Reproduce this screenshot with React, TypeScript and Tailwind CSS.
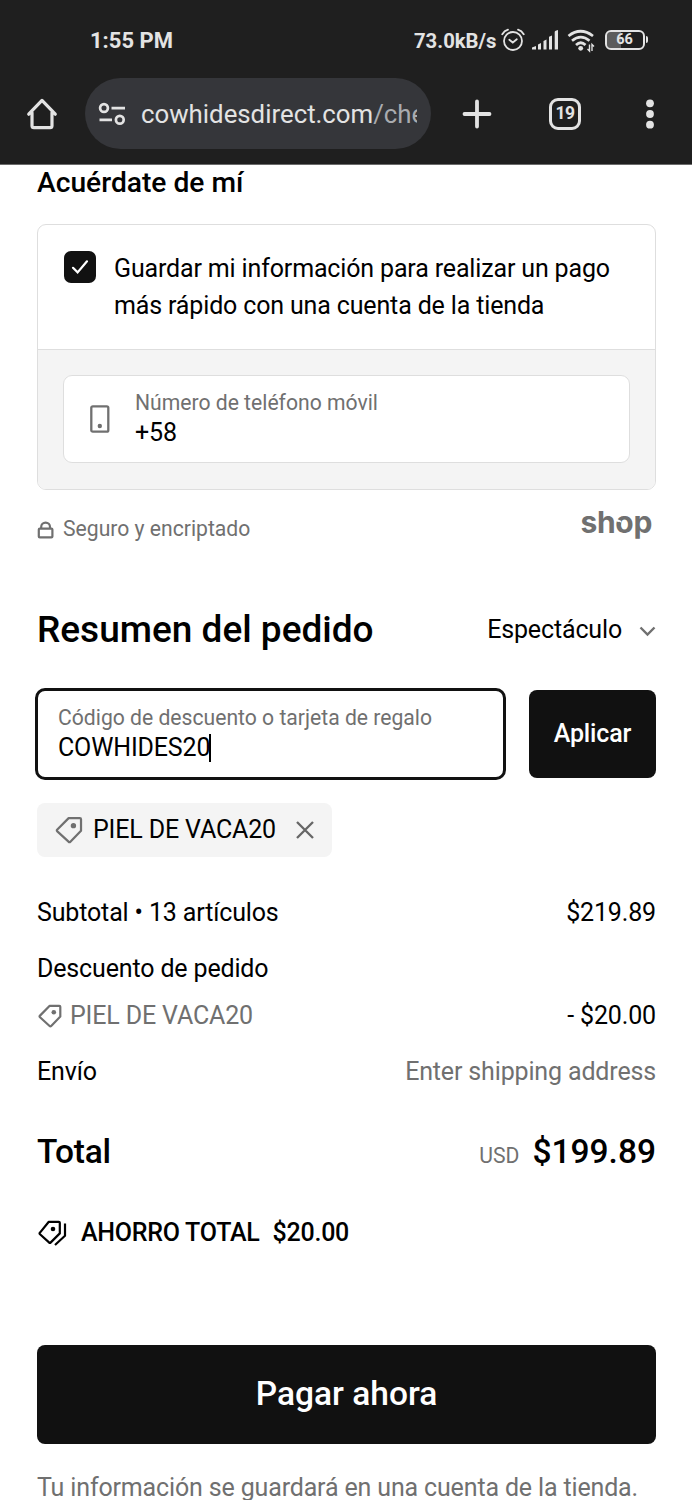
import type { ReactNode } from 'react'

const summaryRows = [
  { label: 'Subtotal • 13 artículos', value: '$219.89' },
  { label: 'Descuento de pedido', value: '' },
]

export default function App() {
  return (
    <div className="h-[1500px] w-[692px] overflow-hidden bg-white font-['Roboto',sans-serif] text-[25px] tracking-[-0.15px] text-black">
      <BrowserHeader />
      <main className="flex flex-col pr-9 pl-[37px]">
        <RememberMe />
        <OrderSummary />
        <button className="mt-[94px] h-[99px] rounded-lg bg-[#111] text-[33.5px] font-medium tracking-normal text-white">
          Pagar ahora
        </button>
        <p className="mt-[26px] leading-9 whitespace-nowrap text-[#707070]">
          Tu información se guardará en una cuenta de la tienda.
        </p>
      </main>
    </div>
  )
}

function BrowserHeader() {
  return (
    <header className="h-[165px] border-b border-[#6b6b6b] bg-[#1f1f1f] tracking-normal text-[#e3e3e3]">
      {/* Status bar */}
      <div className="flex h-[78px] items-center pt-[3px] pr-[44px] pl-[90px]">
        <span className="-mt-px text-[22px] font-bold">1:55 PM</span>
        <span className="mt-px ml-auto text-[20.3px] font-bold">73.0kB/s</span>
        <div className="ml-[4px] flex items-center">
          <AlarmIcon />
          <SignalIcon />
          <WifiIcon />
          <Battery level={66} />
        </div>
      </div>

      {/* Toolbar */}
      <div className="flex h-[71px] items-center">
        <HomeIcon />
        <div className="ml-[27px] flex h-[71px] w-[346px] items-center rounded-full bg-[#35363a] pr-[14px] pl-[13px]">
          <SiteSettingsIcon />
          <span className="ml-[14px] w-[276px] overflow-hidden text-[25.8px] leading-9 whitespace-nowrap">
            cowhidesdirect.com<span className="text-[#a9abaf]">/che</span>
          </span>
        </div>
        <svg className="ml-[31px]" width="30" height="30" viewBox="0 0 30 30" fill="none">
          <path d="M15 2.5v25M2.5 15h25" stroke="currentColor" strokeWidth="3.8" strokeLinecap="round" />
        </svg>
        <div className="ml-[57px] flex h-8 w-8 items-center justify-center rounded-[9px] border-[3.5px] border-current text-[17.5px] font-bold tracking-[-0.5px]">
          19
        </div>
        <svg className="ml-16" width="10" height="30" viewBox="0 0 10 30" fill="currentColor">
          <circle cx="5" cy="4.3" r="3.9" />
          <circle cx="5" cy="15" r="3.9" />
          <circle cx="5" cy="25.7" r="3.9" />
        </svg>
      </div>
    </header>
  )
}

function RememberMe() {
  return (
    <section>
      <h2 className="text-[28.2px] leading-[36px] font-medium tracking-normal">Acuérdate de mí</h2>
      <div className="mt-[23px] h-[266px] overflow-hidden rounded-[9px] border border-[#dedede]">
        <label className="flex h-[125px] items-start gap-[18px] border-b border-[#dedede] pt-[25px] pl-[26px]">
          <span className="mt-px flex h-8 w-8 shrink-0 items-center justify-center rounded-[7px] bg-[#111]">
            <svg width="20" height="20" viewBox="0 0 20 20" fill="none">
              <path d="M3 10.8l4.6 4.6L17 4.3" stroke="#fff" strokeWidth="2.2" strokeLinecap="round" />
            </svg>
          </span>
          <span className="leading-[37px] whitespace-nowrap">
            Guardar mi información para realizar un pago
            <br />
            más rápido con una cuenta de la tienda
          </span>
        </label>
        <div className="h-[139px] bg-[#f4f4f4] px-[25px] pt-[25px]">
          <div className="flex h-[88px] items-center rounded-[9px] border border-[#dedede] bg-white pl-[26px]">
            <svg width="20" height="28" viewBox="0 0 20 28" fill="none">
              <rect x="1.3" y="1.3" width="17" height="25.4" rx="1.5" stroke="#707070" strokeWidth="2.3" />
              <circle cx="9.8" cy="21" r="2.2" fill="#707070" />
            </svg>
            <Field className="-mt-[2px] ml-[25px]" label="Número de teléfono móvil">
              +58
            </Field>
          </div>
        </div>
      </div>
      <div className="mt-[19px] flex h-[40px] items-center text-[21.15px] tracking-normal text-[#707070]">
        <svg className="mt-px mr-[9px]" width="17" height="18" viewBox="0 0 17 18" fill="none" stroke="currentColor" strokeWidth="2.2">
          <rect x="1.8" y="7.6" width="13.6" height="8.8" rx="1" />
          <path d="M4.2 7.5V6a4.4 4.4 0 0 1 8.8 0v1.5" />
        </svg>
        Seguro y encriptado
        <ShopLogo />
      </div>
    </section>
  )
}

function OrderSummary() {
  return (
    <section>
      <div className="mt-[58px] flex h-[46px] items-center justify-between">
        <h1 className="text-[37px] font-medium tracking-normal">Resumen del pedido</h1>
        <span className="-mt-px flex items-center">
          Espectáculo
          <svg className="mt-[4px] ml-[17px]" width="17" height="11" viewBox="0 0 17 11" fill="none">
            <path d="M1.5 1.5l7 7 7-7" stroke="#707070" strokeWidth="2.4" />
          </svg>
        </span>
      </div>

      {/* Discount code */}
      <div className="mt-[35px] flex items-center">
        <div className="-ml-[2px] flex h-[92px] w-[471px] items-center rounded-[10px] border-3 border-[#111] pl-5">
          <Field className="-mt-[2px]" label="Código de descuento o tarjeta de regalo">
            COWHIDES20
            <span className="-ml-px inline-block h-7 w-[2px] bg-black align-[-6px]" />
          </Field>
        </div>
        <button className="ml-[23px] h-[88px] flex-1 rounded-lg bg-[#111] pb-px font-medium text-white">Aplicar</button>
      </div>
      <div className="mt-[23px] flex h-[54px] w-[295px] items-center rounded-lg bg-[#f4f4f4] pl-[18px]">
        <TagIcon className="h-7 w-7 text-[#707070]" strokeWidth={1.9} />
        <span className="-mt-px ml-[10px]">PIEL DE VACA20</span>
        <svg className="ml-[19px]" width="20" height="20" viewBox="0 0 20 20" fill="none">
          <path d="M2 2l16 16M18 2L2 18" stroke="#666" strokeWidth="2.3" />
        </svg>
      </div>

      {/* Cost lines */}
      <div className="mt-[27px]">
        {summaryRows.map((row) => (
          <Row key={row.label} className="h-[56.5px]">
            <span>{row.label}</span>
            <span>{row.value}</span>
          </Row>
        ))}
        <Row className="-mt-[9px] h-[56px]">
          <span className="flex items-center text-[#707070]">
            <TagIcon className="mr-2 ml-px h-6 w-6" strokeWidth={2.2} />
            PIEL DE VACA20
          </span>
          <span>- $20.00</span>
        </Row>
        <Row className="h-[56px]">
          <span>Envío</span>
          <span className="text-[#707070]">Enter shipping address</span>
        </Row>
      </div>
      <Row className="mt-[29px] h-[46px] text-[33.5px] font-medium tracking-normal">
        <span className="tracking-[-0.2px]">Total</span>
        <span className="flex items-baseline">
          <span className="mr-[13px] text-[21.15px] font-normal text-[#707070]">USD</span>
          $199.89
        </span>
      </Row>
      <div className="mt-10 flex h-[36px] items-center font-medium tracking-[-0.25px]">
        <SavingsIcon />
        <span className="ml-[13px]">AHORRO TOTAL</span>
        <span className="ml-[13px]">$20.00</span>
      </div>
    </section>
  )
}

function Row({ className, children }: { className: string; children: ReactNode }) {
  return <div className={`flex items-center justify-between ${className}`}>{children}</div>
}

function Field({ className = '', label, children }: { className?: string; label: string; children: ReactNode }) {
  return (
    <div className={`whitespace-nowrap ${className}`}>
      <div className="text-[21.15px] leading-[29px] tracking-normal text-[#707070]">{label}</div>
      <div className="h-[31px] leading-[31px]">{children}</div>
    </div>
  )
}

function ShopLogo() {
  return (
    <span className="relative -mt-[14px] mr-[4px] ml-auto font-['Inter',sans-serif] text-[30px] leading-9 font-bold tracking-[-0.3px]">
      shop
      {/* open curl of the third letter */}
      <svg className="absolute top-[14px] left-[34px]" width="12" height="12" viewBox="0 0 12 12" fill="none">
        <path d="M-1 0.5L7 4" stroke="#fff" strokeWidth="2.4" />
        <circle cx="5" cy="5.8" r="2.1" fill="#707070" />
      </svg>
    </span>
  )
}

function TagIcon({ className, strokeWidth }: { className: string; strokeWidth: number }) {
  return (
    <svg className={className} viewBox="0 0 24 24" fill="none" stroke="currentColor" strokeWidth={strokeWidth} strokeLinejoin="round">
      <path d="M11.7 1.8h9.6q1 0 1 1v9.8L13.2 22q-.8.8-1.6 0L2 13.2q-.8-.8 0-1.6z" />
      <circle cx="15.8" cy="8.3" r="2.3" fill="currentColor" stroke="none" />
    </svg>
  )
}

function SavingsIcon() {
  return (
    <svg className="ml-px" width="30" height="26" viewBox="0 0 30 26" fill="none" stroke="currentColor" strokeWidth="2.2" strokeLinejoin="round">
      <path d="M10.8 1.8h10q1 0 1 1v10.6l-9 9q-.9.9-1.8 0l-9-8.2q-.8-.8 0-1.6z" />
      <path d="M27 3.5v12.2L17 25" />
      <circle cx="15" cy="9" r="2.3" fill="currentColor" stroke="none" />
    </svg>
  )
}

function AlarmIcon() {
  return (
    <svg className="-mt-px" width="24" height="24" viewBox="0 0 24 24" fill="none" stroke="currentColor" strokeWidth="1.8">
      <circle cx="12" cy="13" r="9" />
      <path d="M8.3 11.7l3.5 2.8 4-3.2M1.3 6.3q2-3.5 5.7-4.6M22.7 6.3q-2-3.5-5.7-4.6" strokeLinecap="round" />
    </svg>
  )
}

function SignalIcon() {
  return (
    <svg className="mb-[2px] ml-[7px]" width="27" height="20" viewBox="0 0 27 20" fill="currentColor">
      <path d="M0 19.5v-2l4-1.5v3.5zM6 14.5l3-1.5v6.5H6zM11.5 11l3-1.5v10h-3zM17 6.8l3-1.3v14h-3zM22.7 2q0-1 1-1.3l2.3-.7v19.5h-3.3z" />
    </svg>
  )
}

function WifiIcon() {
  return (
    <svg className="ml-2" width="29" height="24" viewBox="0 0 29 24" fill="none" stroke="currentColor">
      <path d="M1.5 7q12-9.5 24.5 0" strokeWidth="2.7" />
      <path d="M5 11.7q8.8-7.2 17.5 0" strokeWidth="2.7" />
      <path d="M9 16q4.8-4.5 9.5 0" strokeWidth="2.7" />
      <circle cx="13.7" cy="19.3" r="2.4" fill="currentColor" stroke="none" />
      <path d="M22.5 15.5v6.5l-2-2M25 22v-6.5l2 2" strokeWidth="1.4" />
    </svg>
  )
}

function Battery({ level }: { level: number }) {
  return (
    <div className="-mt-[2px] ml-[9px] flex items-center">
      <div className="flex h-5 w-10 items-center justify-center rounded-md border-[2.5px] border-current bg-[linear-gradient(to_right,#5c5c5c_40%,#1f1f1f_40%)] bg-clip-padding pt-[2px] text-[14.5px] leading-none font-bold">
        {level}
      </div>
      <div className="ml-px h-[7px] w-[2.5px] rounded-r bg-current" />
    </div>
  )
}

function HomeIcon() {
  return (
    <svg className="ml-[26px]" width="32" height="34" viewBox="-0.5 -0.5 33 35" fill="none" stroke="currentColor" strokeWidth="3.3" strokeLinejoin="round">
      <path d="M2.3 17.2L16 3l13.7 14.2M5.7 15.5V29q0 2 2 2h16.6q2 0 2-2V15.5" strokeLinecap="round" />
    </svg>
  )
}

function SiteSettingsIcon() {
  return (
    <svg width="29" height="24" viewBox="0 0 29 24" fill="none" stroke="currentColor" strokeWidth="2.7">
      <circle cx="6" cy="6" r="3.9" />
      <path d="M13.5 6.2H27M1.5 17.8H14" />
      <circle cx="21.8" cy="17.8" r="3.9" />
    </svg>
  )
}
